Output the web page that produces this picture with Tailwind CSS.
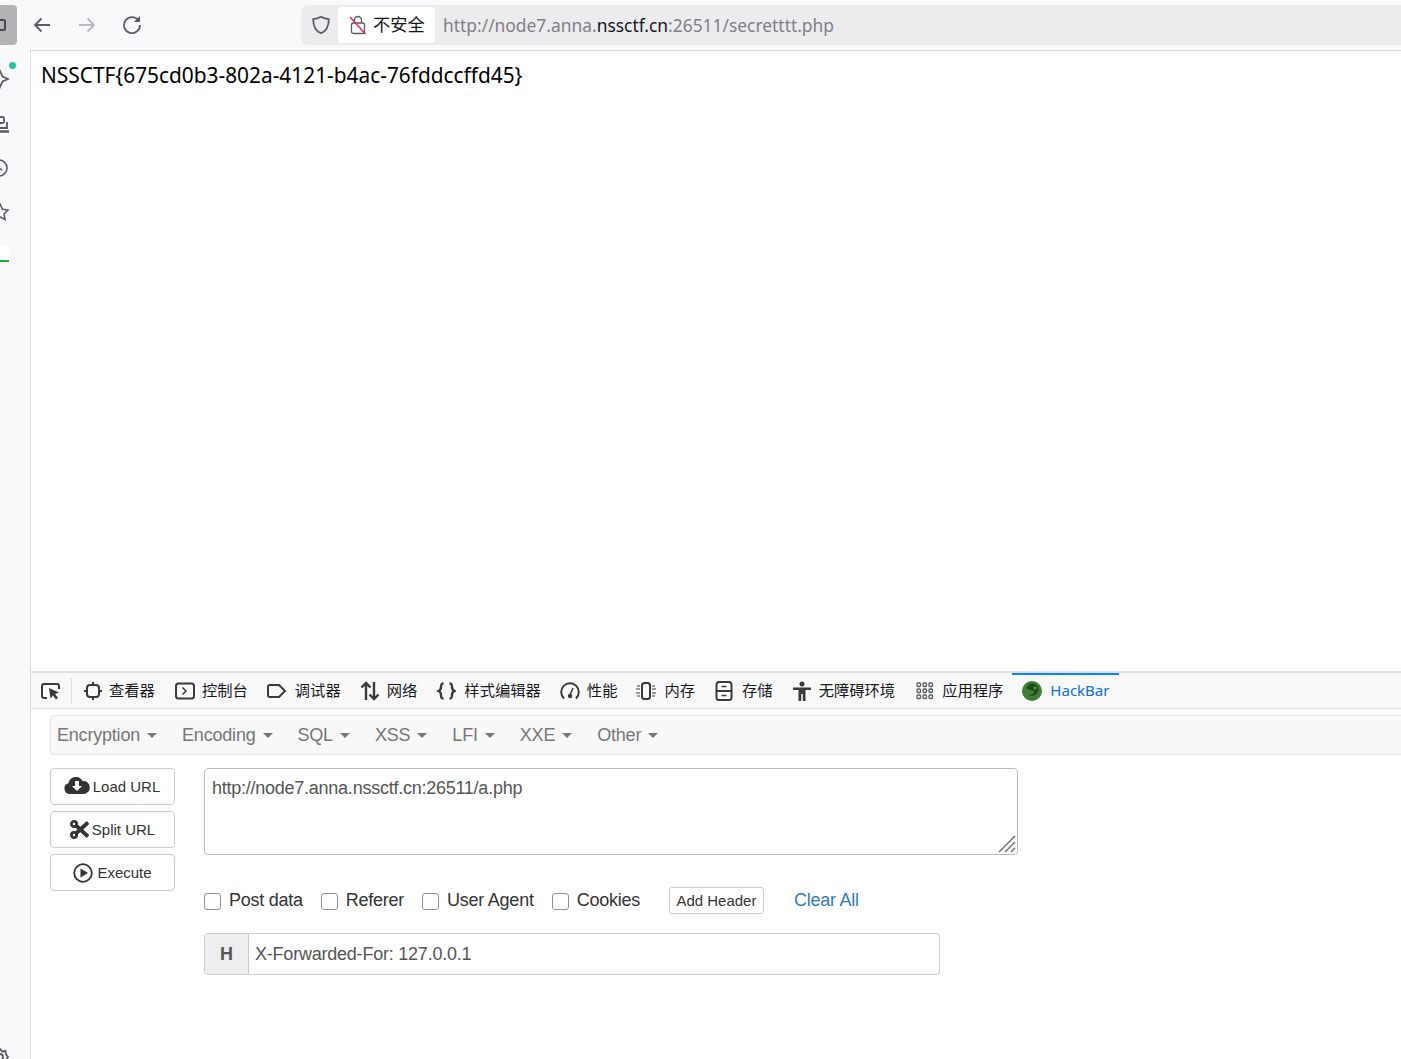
<!DOCTYPE html>
<html>
<head>
<meta charset="utf-8">
<title>secretttt.php</title>
<script src="https://cdn.jsdelivr.net/npm/@tailwindcss/browser@4"></script>
</head>
<body class="bg-[#f9f9fb] overflow-hidden font-['Noto_Sans','Noto_Sans_CJK_SC',sans-serif]">
<div class="w-[1401px] h-[1059px] flex flex-col overflow-hidden">
	<!-- Browser toolbar -->
	<div class="h-[50px] shrink-0 flex items-start pt-[5px]">
		<div class="w-[17px] h-[40px] bg-[#b4b4b6] rounded-r-[4px] flex items-center overflow-hidden shrink-0">
			<div class="w-[12px] h-[12px] border-2 border-[#4a4a4f] rounded-[2px] -ml-[6px]"></div>
		</div>
		<svg class="ml-[15px] mt-[10px] shrink-0" width="20" height="20" viewBox="0 0 20 20" fill="none" stroke="#5b5b66" stroke-width="1.8"><path d="M18 10H3M9.500 3.500 3 10l6.500 6.500"/></svg>
		<svg class="ml-[25px] mt-[10px] shrink-0" width="20" height="20" viewBox="0 0 20 20" fill="none" stroke="#b9b9bf" stroke-width="1.800"><path d="M2 10h15M10.500 3.500 17 10l-6.500 6.500"/></svg>
		<svg class="ml-[25px] mt-[9px] shrink-0" width="20" height="20" viewBox="0 0 20 20" fill="none" stroke="#5b5b66" stroke-width="1.800"><path d="M16.500 6.500A8 8 0 1 0 18 11"/><path d="M18 2v6h-6z" fill="#5b5b66" stroke="none"/></svg>
		<!-- Address bar -->
		<div class="ml-[159px] w-[1100px] h-[40px] bg-[#ececee] rounded-l-[8px] flex items-center shrink-0">
			<svg class="ml-[10px] shrink-0" width="20" height="20" viewBox="0 0 20 20" fill="none" stroke="#5b5b66" stroke-width="1.800"><path d="M10 1.800c2.500 1.500 5 2.200 7.800 2.400 0 6.500-1.500 11.500-7.800 14-6.300-2.500-7.800-7.500-7.800-14C5 4 7.500 3.300 10 1.800z"/></svg>
			<div class="ml-[7px] w-[97px] h-[36px] bg-white rounded-[4px] flex items-center shrink-0">
				<svg class="ml-[11px] shrink-0" width="18" height="20" viewBox="0 0 18 20" fill="none"><rect x="2.500" y="8" width="13" height="10.500" rx="2" stroke="#5b5b66" stroke-width="1.300"/><path d="M5.500 8V5a3.500 3.500 0 0 1 7 0v3" stroke="#5b5b66" stroke-width="1.300"/><path d="M1 2l15.500 17" stroke="#e22850" stroke-width="1.500"/></svg>
				<span class="ml-[6px] text-[17.300px] leading-none text-[#15141a] whitespace-nowrap">不安全</span>
			</div>
			<div class="ml-[8px] mt-[2px] text-[17.400px] leading-none text-[#7f7f85] whitespace-nowrap">http://node7.anna.<span class="text-[#15141a]">nssctf.cn</span>:26511/secretttt.php</div>
		</div>
	</div>

	<div class="flex-1 flex min-h-0">
		<!-- Sidebar, cut off at the window edge -->
		<div class="w-[30px] shrink-0 relative flex flex-col overflow-hidden">
			<div class="absolute left-[9px] top-[12px] w-[7px] h-[7px] rounded-full bg-[#2ac3a2]"></div>
			<svg class="-ml-[10px] mt-[19px] shrink-0" width="20" height="20" viewBox="0 0 20 20" fill="none" stroke="#5b5b66" stroke-width="1.800"><path d="M10 2l2.500 5.500L18 10l-5.500 2.500L10 18l-2.500-5.500L2 10l5.500-2.500z"/></svg>
			<svg class="-ml-[10px] mt-[25px] shrink-0" width="20" height="20" viewBox="0 0 20 20" fill="none" stroke="#5b5b66" stroke-width="1.800"><rect x="6" y="3" width="8" height="6" rx="1.500"/><path d="M4 9v5h13V8"/><path d="M3 17.500h16" stroke-width="2.500"/></svg>
			<svg class="-ml-[11px] mt-[24px] shrink-0" width="20" height="20" viewBox="0 0 20 20" fill="none" stroke="#5b5b66" stroke-width="1.600"><circle cx="10" cy="10" r="8"/><path d="M10 6v4l3 2"/></svg>
			<svg class="-ml-[10px] mt-[24px] shrink-0" width="20" height="20" viewBox="0 0 20 20" fill="none" stroke="#5b5b66" stroke-width="1.600"><path d="M10 2l2.500 5.200 5.500.8-4 4 1 5.500-5-2.700-5 2.700 1-5.500-4-4 5.500-.8z"/></svg>
			<div class="w-[9px] h-[17px] bg-white mt-[23px] shrink-0 border-b-2 border-[#1fa83c]"></div>
			<svg class="absolute -left-[10px] bottom-[-8px]" width="20" height="20" viewBox="0 0 20 20" fill="none" stroke="#5b5b66" stroke-width="1.800"><circle cx="10" cy="10" r="3"/><path d="M10 2l2 2.500 3.500-.5.500 3.500L18 10l-2 2.500-.5 3.500-3.500-.5L10 18l-2-2.500-3.500.5L4 12.500 2 10l2-2.500.5-3.500L8 4.500z"/></svg>
		</div>

		<!-- Content column -->
		<div class="flex-1 min-w-0 bg-white border-l border-t border-[#dcdcde] flex flex-col overflow-hidden">
			<div class="h-[620px] shrink-0 pl-[10px] pt-[11px] text-[20.850px] leading-[27px] text-black whitespace-nowrap">NSSCTF{675cd0b3-802a-4121-b4ac-76fddccffd45}</div>

			<!-- Devtools tabs -->
			<div class="h-[38px] shrink-0 bg-[#f9f9fa] border-t-2 border-b border-[#e0e0e2] flex items-center text-[15.300px] leading-none text-[#18181a] whitespace-nowrap">
				<svg class="ml-[9px] shrink-0" width="21" height="20" viewBox="0 0 21 20" fill="none"><path d="M7 17H4a2 2 0 0 1-2-2V5a2 2 0 0 1 2-2h13a2 2 0 0 1 2 2v3" stroke="#3a3a3d" stroke-width="2"/><path d="M9 7l10 4.500-4 1.500 3 4-2 1.500-3-4-2.500 3z" fill="#3a3a3d"/></svg>
				<div class="ml-[10px] w-px h-[26px] bg-[#e0e0e2] shrink-0"></div>
				<svg class="ml-[12px] shrink-0" width="18" height="18" viewBox="0 0 18 18" fill="none" stroke="#3a3a3d" stroke-width="2"><rect x="3" y="3" width="12" height="12" rx="3"/><path d="M9 0v3M9 15v3M0 9h3M15 9h3"/></svg>
				<span class="ml-[7px]">查看器</span>
				<svg class="ml-[20px] shrink-0" width="20" height="18" viewBox="0 0 20 18" fill="none" stroke="#3a3a3d" stroke-width="2"><rect x="1" y="1.500" width="18" height="15" rx="2.500"/><path d="M7.500 5.500 11 9l-3.500 3.500" stroke-width="1.500"/></svg>
				<span class="ml-[7px]">控制台</span>
				<svg class="ml-[19px] shrink-0" width="20" height="16" viewBox="0 0 20 16" fill="none" stroke="#3a3a3d" stroke-width="2"><path d="M3 2h9l6 6-6 6H3a2 2 0 0 1-2-2V4a2 2 0 0 1 2-2z"/></svg>
				<span class="ml-[8px]">调试器</span>
				<svg class="ml-[19px] shrink-0" width="20" height="20" viewBox="0 0 20 20" fill="none" stroke="#3a3a3d" stroke-width="2.400"><path d="M6 19V2M1.500 6.500 6 2l4.500 4.500M14 1v17M9.500 13.500 14 18l4.500-4.500"/></svg>
				<span class="ml-[7px]">网络</span>
				<svg class="ml-[20px] shrink-0" width="19" height="18" viewBox="0 0 19 18" fill="none" stroke="#3a3a3d" stroke-width="2.400"><path d="M6.500 1.500C4 1.500 4 3 4 5c0 2 0 3-2.500 4C4 10 4 11 4 13c0 2 0 3.500 2.500 3.500M12.500 1.500C15 1.500 15 3 15 5c0 2 0 3 2.500 4C15 10 15 11 15 13c0 2 0 3.500-2.500 3.500"/></svg>
				<span class="ml-[8px]">样式编辑器</span>
				<svg class="ml-[19px] shrink-0" width="20" height="18" viewBox="0 0 20 18" fill="none" stroke="#3a3a3d" stroke-width="2"><path d="M4 16.500a8.800 8.800 0 1 1 12 0"/><path d="M13 6l-3 7" stroke-width="1.500"/><circle cx="10" cy="14" r="2.200" fill="#3a3a3d" stroke="none"/></svg>
				<span class="ml-[7px]">性能</span>
				<svg class="ml-[19px] shrink-0" width="20" height="20" viewBox="0 0 20 20" fill="none" stroke="#3a3a3d"><rect x="6" y="2" width="8" height="16" rx="2.500" stroke-width="2"/><path d="M1 5h3M0 8h4M0 12h4M1 15h3M16 5h3M16 8h4M16 12h4M16 15h3" stroke-width="1"/></svg>
				<span class="ml-[8px]">内存</span>
				<svg class="ml-[20px] shrink-0" width="18" height="20" viewBox="0 0 18 20" fill="none" stroke="#3a3a3d" stroke-width="2"><rect x="1.500" y="1" width="15" height="18" rx="2.500"/><path d="M1.500 10h15"/><path d="M6.500 5.500h5M6.500 14.500h5" stroke-width="1.500"/></svg>
				<span class="ml-[9px]">存储</span>
				<svg class="ml-[19px] shrink-0" width="20" height="20" viewBox="0 0 20 20" fill="#3a3a3d"><circle cx="10" cy="3" r="2.500"/><path d="M1 6.500h18v2.500h-5.500V20h-2.700v-7H9.200v7H6.500V9H1z"/></svg>
				<span class="ml-[7px]">无障碍环境</span>
				<svg class="ml-[21px] shrink-0" width="18" height="18" viewBox="0 0 18 18" fill="none" stroke="#5b5b5f" stroke-width="1.300"><rect x="1" y="1" width="3.500" height="3.500" rx="1"/><rect x="7" y="1" width="3.500" height="3.500" rx="1"/><rect x="13" y="1" width="3.500" height="3.500" rx="1"/><rect x="1" y="7" width="3.500" height="3.500" rx="1"/><rect x="7" y="7" width="3.500" height="3.500" rx="1"/><rect x="13" y="7" width="3.500" height="3.500" rx="1"/><rect x="1" y="13" width="3.500" height="3.500" rx="1"/><rect x="7" y="13" width="3.500" height="3.500" rx="1"/><rect x="13" y="13" width="3.500" height="3.500" rx="1"/></svg>
				<span class="ml-[8px]">应用程序</span>
				<div class="ml-[9px] w-[107px] h-full border-t-2 border-[#0a84ff] flex items-center shrink-0">
					<svg class="ml-[10px] -mt-[2px] shrink-0" width="20" height="20" viewBox="0 0 20 20"><circle cx="10" cy="10" r="10" fill="#3d7f33"/><path d="M4 7c2-4 7-6 10-3 3 2 3 6 1 8-2 3-6 4-8 2 3 0 5-1 5-4-2-1-5-1-8-3z" fill="#1f4a1c"/><circle cx="13" cy="7" r="1.500" fill="#5da04f"/></svg>
					<span class="ml-[8px] -mt-[2px] text-[15px] text-[#0a6fdc] font-['Noto_Sans',sans-serif]">HackBar</span>
				</div>
			</div>

			<!-- HackBar panel -->
			<div class="flex-1 pl-[19px] pt-[6px] font-['Liberation_Sans',sans-serif] text-[#555]">
				<div class="h-[40px] w-[1400px] bg-[#f8f8f8] border border-[#e7e7e7] rounded-l-[4px] flex items-center text-[18px] leading-none text-[#777] tracking-[-0.2px] whitespace-nowrap">
					<span class="ml-[6px] flex items-center">Encryption<i class="ml-[7px] border-x-[5px] border-x-transparent border-t-[5px] border-t-[#777]"></i></span>
					<span class="ml-[25px] flex items-center">Encoding<i class="ml-[7px] border-x-[5px] border-x-transparent border-t-[5px] border-t-[#777]"></i></span>
					<span class="ml-[25px] flex items-center">SQL<i class="ml-[7px] border-x-[5px] border-x-transparent border-t-[5px] border-t-[#777]"></i></span>
					<span class="ml-[25px] flex items-center">XSS<i class="ml-[7px] border-x-[5px] border-x-transparent border-t-[5px] border-t-[#777]"></i></span>
					<span class="ml-[25px] flex items-center">LFI<i class="ml-[7px] border-x-[5px] border-x-transparent border-t-[5px] border-t-[#777]"></i></span>
					<span class="ml-[25px] flex items-center">XXE<i class="ml-[7px] border-x-[5px] border-x-transparent border-t-[5px] border-t-[#777]"></i></span>
					<span class="ml-[25px] flex items-center">Other<i class="ml-[7px] border-x-[5px] border-x-transparent border-t-[5px] border-t-[#777]"></i></span>
				</div>
				<div class="flex mt-[13px]">
					<!-- Left buttons -->
					<div class="w-[125px] shrink-0 flex flex-col gap-[6px] text-[15px] leading-none text-[#333]">
						<div class="h-[37px] border border-[#ccc] rounded-[4px] bg-white flex items-center justify-center gap-[3px]">
							<svg class="-mt-[3px] -ml-[1px]" width="26" height="20" viewBox="0 0 26 20"><path d="M6 19a5.500 5.500 0 0 1-1.500-10.800A7.500 7.500 0 0 1 18.500 6a6.500 6.500 0 0 1 1.500 13z" fill="#333"/><path d="M11 6h4v5h3l-5 5-5-5h3z" fill="#fff"/></svg>
							<span>Load URL</span>
						</div>
						<div class="h-[37px] border border-[#ccc] rounded-[4px] bg-white flex items-center justify-center gap-[3px]">
							<svg class="-mt-[1px]" width="19" height="19" viewBox="0 0 19 19" fill="none" stroke="#333"><circle cx="4" cy="4" r="2.600" stroke-width="2.800"/><circle cx="4" cy="15" r="2.600" stroke-width="2.800"/><path d="M6 5.500 18 16.500M6 13.500 18 2.500" stroke-width="3.800"/></svg>
							<span>Split URL</span>
						</div>
						<div class="h-[37px] border border-[#ccc] rounded-[4px] bg-white flex items-center justify-center gap-[4px]">
							<svg width="20" height="20" viewBox="0 0 20 20"><circle cx="10" cy="10" r="8.800" fill="none" stroke="#333" stroke-width="1.800"/><path d="M7.500 5.500 15 10l-7.500 4.500z" fill="#333"/></svg>
							<span>Execute</span>
						</div>
					</div>
					<!-- Right form -->
					<div class="ml-[29px] flex-1 min-w-0">
						<div class="relative w-[814px] h-[87px] border border-[#bbb] rounded-[4px] px-[7px] pt-[8px] text-[18px] leading-[22px] text-[#555] tracking-[-0.25px] whitespace-nowrap">http://node7.anna.nssctf.cn:26511/a.php
							<svg class="absolute right-0 bottom-0" width="20" height="20" viewBox="0 0 20 20" fill="none" stroke="#666" stroke-width="1.300"><path d="M2 18 18 2M8 18 18 8M14 18l4-4"/></svg>
						</div>
						<div class="flex items-center h-[28px] mt-[31px] text-[18px] leading-none text-[#333] tracking-[-0.25px] whitespace-nowrap">
							<input type="checkbox" class="mt-[2px] w-[17px] h-[17px] shrink-0 appearance-none border border-[#8f8f9d] rounded-[3px] bg-white">
							<span class="ml-[8px]">Post data</span>
							<input type="checkbox" class="mt-[2px] ml-[18px] w-[17px] h-[17px] shrink-0 appearance-none border border-[#8f8f9d] rounded-[3px] bg-white">
							<span class="ml-[8px]">Referer</span>
							<input type="checkbox" class="mt-[2px] ml-[18px] w-[17px] h-[17px] shrink-0 appearance-none border border-[#8f8f9d] rounded-[3px] bg-white">
							<span class="ml-[8px]">User Agent</span>
							<input type="checkbox" class="mt-[2px] ml-[18px] w-[17px] h-[17px] shrink-0 appearance-none border border-[#8f8f9d] rounded-[3px] bg-white">
							<span class="ml-[8px]">Cookies</span>
							<div class="ml-[29px] w-[95px] h-[27px] border border-[#ccc] rounded-[3px] flex items-center justify-center text-[15px] tracking-normal">Add Header</div>
							<span class="ml-[30px] text-[#337ab7]">Clear All</span>
						</div>
						<div class="flex w-[736px] h-[42px] mt-[19px] border border-[#ccc] rounded-[4px] text-[18px] leading-none tracking-[-0.22px] overflow-hidden">
							<div class="w-[44px] bg-[#eee] border-r border-[#ccc] flex items-center justify-center font-bold text-[#555] shrink-0">H</div>
							<div class="flex-1 flex items-center pl-[6px] text-[#555] whitespace-nowrap">X-Forwarded-For: 127.0.0.1</div>
						</div>
					</div>
				</div>
			</div>
		</div>
	</div>
</div>
</body>
</html>
